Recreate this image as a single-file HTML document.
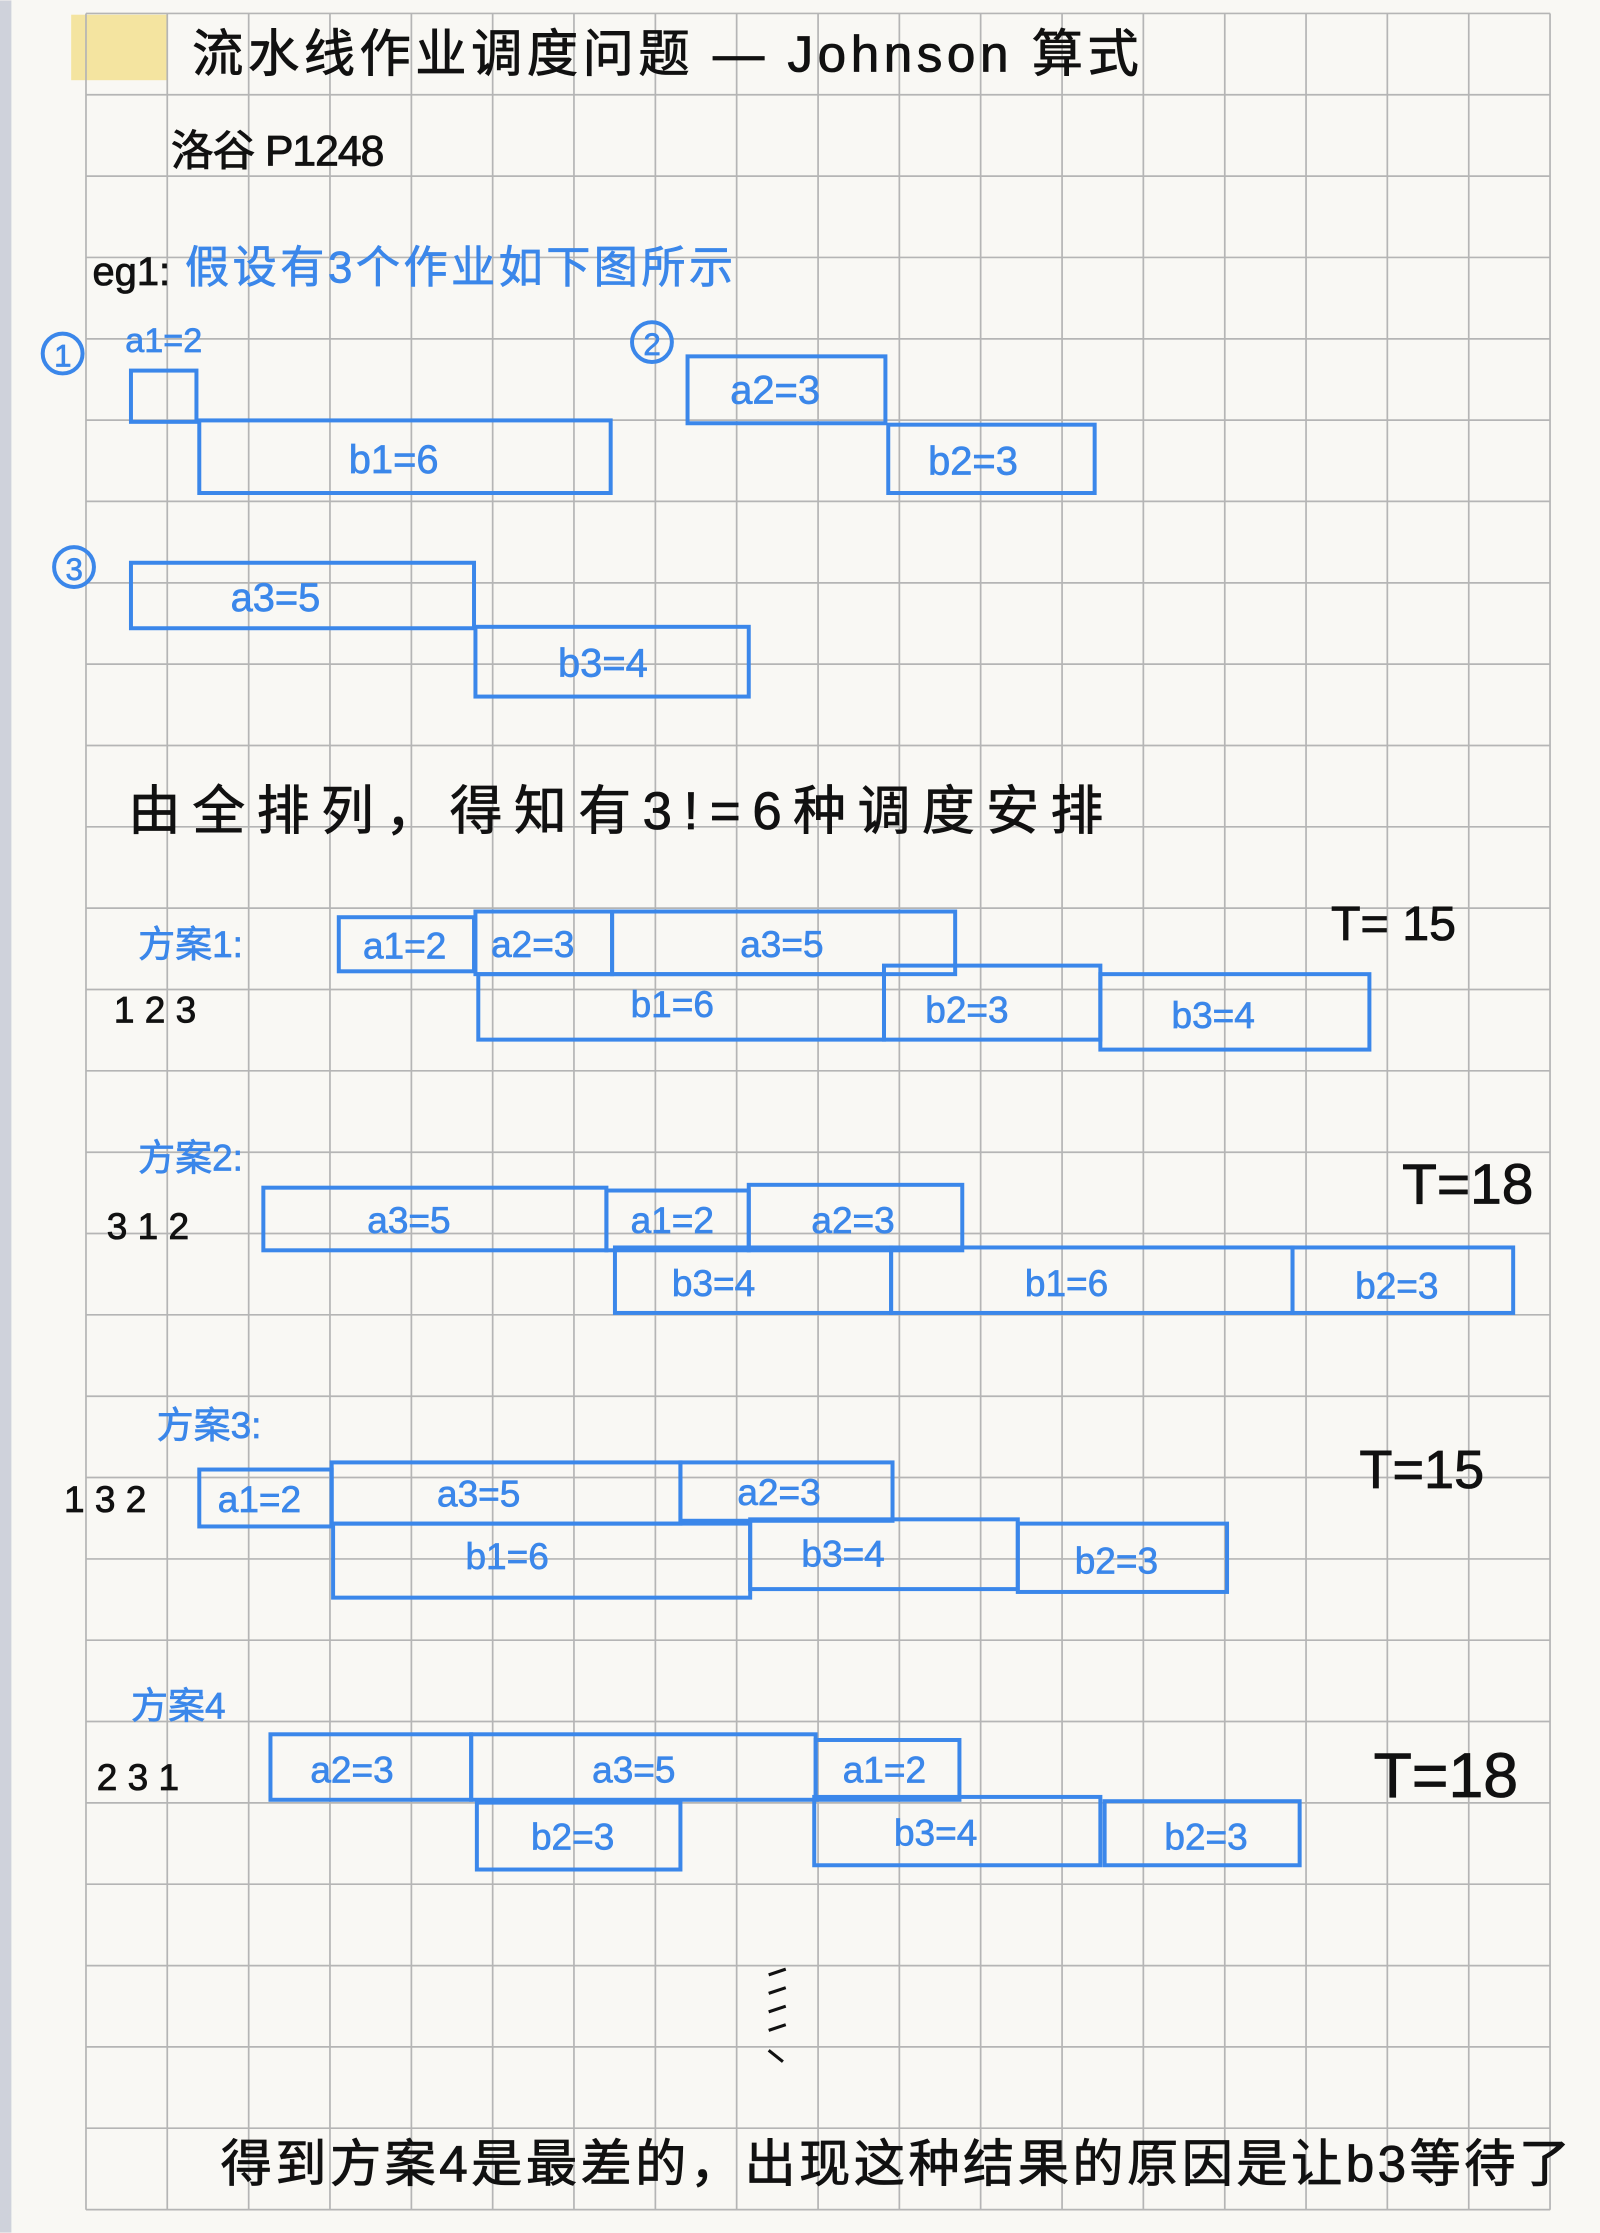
<!DOCTYPE html>
<html><head><meta charset="utf-8"><style>
html,body{margin:0;padding:0;background:#f9f8f4;}
svg{display:block}
.b{fill:none;stroke:#3b87ea;stroke-width:2.8}
.bt{fill:#3b87ea;stroke:#3b87ea;stroke-width:0.5;font-family:"Liberation Sans","Noto Sans CJK SC",sans-serif;}
.k{fill:#111;stroke:#111;stroke-width:0.6;font-family:"Liberation Sans","Noto Sans CJK SC",sans-serif;}
</style></head><body>
<svg width="1600" height="2233" viewBox="0 0 1124 1568" xmlns="http://www.w3.org/2000/svg">
<rect width="1124" height="1568" fill="#f9f8f4"/>
<rect x="0" y="0" width="8" height="1568" fill="#cfd2db"/>
<rect x="50" y="10" width="67" height="46" fill="#f4e4a0"/>
<g stroke="#b5b5b5" stroke-width="1.2" fill="none">
<path d="M60.4 9.1V1552 M117.5 9.1V1552 M174.7 9.1V1552 M231.8 9.1V1552 M289 9.1V1552 M346.1 9.1V1552 M403.2 9.1V1552 M460.4 9.1V1552 M517.5 9.1V1552 M574.7 9.1V1552 M631.8 9.1V1552 M688.9 9.1V1552 M746.1 9.1V1552 M803.2 9.1V1552 M860.4 9.1V1552 M917.5 9.1V1552 M974.6 9.1V1552 M1031.8 9.1V1552 M1088.9 9.1V1552"/>
<path d="M60.4 9.1H1089 M60.4 66.2H1089 M60.4 123.4H1089 M60.4 180.5H1089 M60.4 237.7H1089 M60.4 294.8H1089 M60.4 351.9H1089 M60.4 409.1H1089 M60.4 466.2H1089 M60.4 523.4H1089 M60.4 580.5H1089 M60.4 637.6H1089 M60.4 694.8H1089 M60.4 751.9H1089 M60.4 809.1H1089 M60.4 866.2H1089 M60.4 923.3H1089 M60.4 980.5H1089 M60.4 1037.6H1089 M60.4 1094.8H1089 M60.4 1151.9H1089 M60.4 1209H1089 M60.4 1266.2H1089 M60.4 1323.3H1089 M60.4 1380.5H1089 M60.4 1437.6H1089 M60.4 1494.7H1089 M60.4 1551.9H1089"/>
</g>
<text class="k" x="135" y="50" font-size="36" textLength="665">流水线作业调度问题 — Johnson 算式</text>
<text class="k" x="120" y="116" font-size="30" textLength="150">洛谷 P1248</text>
<text class="k" x="65" y="200" font-size="28">eg1:</text>
<text class="bt" x="130" y="198" font-size="31" textLength="385">假设有3个作业如下图所示</text>
<circle class="b" cx="44" cy="248" r="14"/><text class="bt" x="38" y="257" font-size="22">1</text>
<text class="bt" x="88" y="247" font-size="24">a1=2</text>
<rect class="b" x="92" y="260" width="46" height="36"/>
<rect class="b" x="140" y="295" width="289" height="51"/><text class="bt" x="245" y="332" font-size="28">b1=6</text>
<circle class="b" cx="458" cy="240" r="14"/><text class="bt" x="452" y="249" font-size="22">2</text>
<rect class="b" x="483" y="250" width="139" height="47"/><text class="bt" x="513" y="283" font-size="28">a2=3</text>
<rect class="b" x="624" y="298" width="145" height="48"/><text class="bt" x="652" y="333" font-size="28">b2=3</text>
<circle class="b" cx="52" cy="398" r="14"/><text class="bt" x="46" y="407" font-size="22">3</text>
<rect class="b" x="92" y="395" width="241" height="46"/><text class="bt" x="162" y="429" font-size="28">a3=5</text>
<rect class="b" x="334" y="440" width="192" height="49"/><text class="bt" x="392" y="475" font-size="28">b3=4</text>
<text class="k" x="90" y="582" font-size="37" textLength="685">由全排列，得知有3!=6种调度安排</text>

<text class="bt" x="97" y="672" font-size="26">方案1:</text>
<text class="k" x="80" y="718" font-size="26">1 2 3</text>
<rect class="b" x="238" y="644" width="95" height="38"/><text class="bt" x="255" y="673" font-size="26">a1=2</text>
<rect class="b" x="334" y="640" width="96" height="44"/><text class="bt" x="345" y="672" font-size="26">a2=3</text>
<rect class="b" x="430" y="640" width="241" height="44"/><text class="bt" x="520" y="672" font-size="26">a3=5</text>
<rect class="b" x="336" y="684" width="285" height="46"/><text class="bt" x="443" y="714" font-size="26">b1=6</text>
<rect class="b" x="621" y="678" width="152" height="52"/><text class="bt" x="650" y="718" font-size="26">b2=3</text>
<rect class="b" x="773" y="684" width="189" height="53"/><text class="bt" x="823" y="722" font-size="26">b3=4</text>
<text class="k" x="935" y="660" font-size="34">T= 15</text>

<text class="bt" x="97" y="822" font-size="26">方案2:</text>
<text class="k" x="75" y="870" font-size="26">3 1 2</text>
<rect class="b" x="185" y="834" width="241" height="44"/><text class="bt" x="258" y="866" font-size="26">a3=5</text>
<rect class="b" x="426" y="836" width="100" height="42"/><text class="bt" x="443" y="866" font-size="26">a1=2</text>
<rect class="b" x="526" y="832" width="150" height="46"/><text class="bt" x="570" y="866" font-size="26">a2=3</text>
<rect class="b" x="432" y="876" width="194" height="46"/><text class="bt" x="472" y="910" font-size="26">b3=4</text>
<rect class="b" x="626" y="876" width="282" height="46"/><text class="bt" x="720" y="910" font-size="26">b1=6</text>
<rect class="b" x="908" y="876" width="155" height="46"/><text class="bt" x="952" y="912" font-size="26">b2=3</text>
<text class="k" x="985" y="845" font-size="40">T=18</text>

<text class="bt" x="110" y="1010" font-size="26">方案3:</text>
<text class="k" x="45" y="1062" font-size="26">1 3 2</text>
<rect class="b" x="140" y="1032" width="93" height="40"/><text class="bt" x="153" y="1062" font-size="26">a1=2</text>
<rect class="b" x="233" y="1027" width="245" height="43"/><text class="bt" x="307" y="1058" font-size="26">a3=5</text>
<rect class="b" x="478" y="1027" width="149" height="41"/><text class="bt" x="518" y="1057" font-size="26">a2=3</text>
<rect class="b" x="234" y="1070" width="293" height="52"/><text class="bt" x="327" y="1102" font-size="26">b1=6</text>
<rect class="b" x="527" y="1067" width="188" height="49"/><text class="bt" x="563" y="1100" font-size="26">b3=4</text>
<rect class="b" x="715" y="1070" width="147" height="48"/><text class="bt" x="755" y="1105" font-size="26">b2=3</text>
<text class="k" x="955" y="1045" font-size="38">T=15</text>

<text class="bt" x="92" y="1207" font-size="26">方案4</text>
<text class="k" x="68" y="1257" font-size="26">2 3 1</text>
<rect class="b" x="190" y="1218" width="141" height="46"/><text class="bt" x="218" y="1252" font-size="26">a2=3</text>
<rect class="b" x="331" y="1218" width="242" height="46"/><text class="bt" x="416" y="1252" font-size="26">a3=5</text>
<rect class="b" x="573" y="1222" width="101" height="42"/><text class="bt" x="592" y="1252" font-size="26">a1=2</text>
<rect class="b" x="335" y="1266" width="143" height="47"/><text class="bt" x="373" y="1299" font-size="26">b2=3</text>
<rect class="b" x="572" y="1262" width="201" height="48"/><text class="bt" x="628" y="1296" font-size="26">b3=4</text>
<rect class="b" x="776" y="1265" width="137" height="45"/><text class="bt" x="818" y="1299" font-size="26">b2=3</text>
<text class="k" x="965" y="1262" font-size="44">T=18</text>

<g stroke="#111" stroke-width="2.2"><path d="M540 1387l12 -4 M540 1400l12 -4 M540 1413l12 -4 M540 1426l12 -4 M540 1440l10 8"/></g>
<text class="k" x="155" y="1532" font-size="36" textLength="948">得到方案4是最差的，出现这种结果的原因是让b3等待了</text>
</svg>
</body></html>
